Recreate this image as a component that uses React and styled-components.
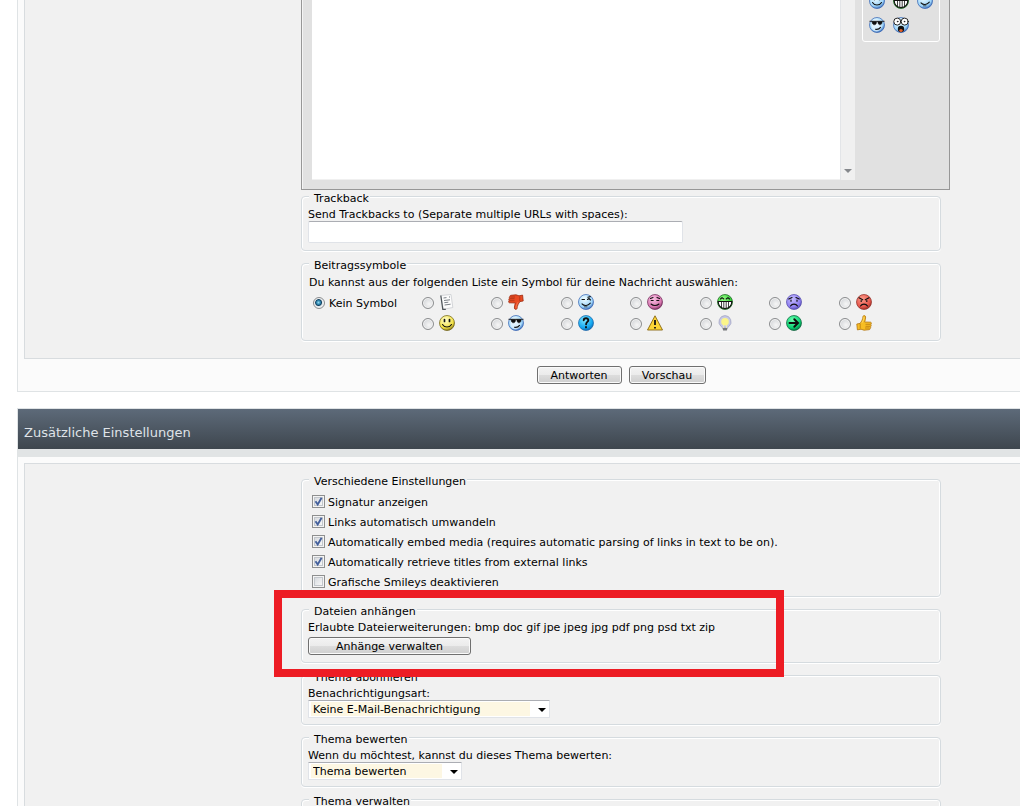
import React from 'react';
import styled, { createGlobalStyle } from 'styled-components';

const GlobalStyle = createGlobalStyle`
    * {
        box-sizing: border-box;
    }
    body {
        margin: 0;
        background: #fff;
        color: #000;
        font-family: "DejaVu Sans", Verdana, sans-serif;
        font-size: 11px;
        line-height: 13px;
    }
    input, select, button, textarea {
        font: inherit;
        color: inherit;
        margin: 0;
    }
`;

//Layout
const Page = styled.main`
    height: 100vh;
    overflow: hidden;
    padding-left: 17px;
`;

const Block = styled.section`
    border-left: 1px solid #dfe3e5;
    background: #fbfbfb;
    padding: ${(props) => (props.$top ? '6px 0 0 6px' : '0 0 0 6px')};
    margin-bottom: 16px;
    border-bottom: 1px solid #dfe3e5;
`;

const Panel = styled.div`
    display: grid;
    grid-template-columns: 276px minmax(0, 1fr);
    background: #f1f1f1;
    border-left: 1px solid #d8dcdf;
    border-top: ${(props) => (props.$top ? '1px solid #d8dcdf' : 'none')};
    border-bottom: 1px solid #d8dcdf;
    padding: ${(props) => (props.$top ? '9px 0 11px' : '0 0 11px')};
`;

const Column = styled.div`
    grid-column: 2;
`;

const Actions = styled.div`
    display: flex;
    justify-content: center;
    gap: 7px;
    max-width: 640px;
    margin-left: 277px;
    padding: 7px 0;
`;

const Heading = styled.h2`
    margin: 0;
    padding: 16px 6px 8px;
    height: 49px;
    border: 1px solid #dfe3e5;
    border-width: 1px 0 8px 1px;
    border-bottom-color: #e1e4e5;
    background: linear-gradient(#5d6a79, #3e464e) padding-box;
    color: #dfe3e8;
    font-size: 13px;
    font-weight: normal;
    line-height: 16px;
`;

//Editor
const Editor = styled.div`
    display: flex;
    max-width: 649px;
    height: 190px;
    border: 1px solid #979797;
    border-top: none;
    background: #e1e1e1;
    box-shadow: inset 1px 0 #f4f4f4;
    padding: 0 9px 9px 10px;
    overflow: hidden;
`;

const Message = styled.textarea`
    flex: 1;
    min-width: 0;
    border: none;
    border-bottom: 1px solid #f0f0f0;
    background: #fff;
    resize: none;
    outline: none;
    overflow: hidden;
`;

const ScrollTrack = styled.div`
    display: flex;
    align-items: flex-end;
    justify-content: center;
    width: 15px;
    padding-bottom: 7px;
    border-left: 1px solid #e3e5e8;
    background: #f0f0f0;
`;

const SmileyBox = styled.div`
    display: grid;
    grid-template-columns: repeat(3, 16px);
    align-content: start;
    gap: 8px;
    height: 52px;
    width: 78px;
    margin: -10px 0 0 7px;
    padding: 2px 6px;
    border: 1px solid #fff;
    border-radius: 3px;
`;

//Form parts
const Group = styled.fieldset`
    position: relative;
    min-width: 0;
    max-width: 640px;
    margin: 0 0 6px;
    padding: 5px 6px ${(props) => props.$bottom || 7}px;
    border: 1px solid #d5dbdf;
    border-radius: 4px;
    box-shadow: inset 1px 1px #fff, inset -1px 0 #fff, 0 1px #fff;
`;

const Legend = styled.legend`
    margin-left: 1px;
    padding: 4px 1px 0 5px;
    background: #f1f1f1;
    line-height: 9px;
`;

const Text = styled.div`
    margin-bottom: 3px;
`;

const FieldLabel = styled.label`
    display: block;
`;

const TextInput = styled.input`
    display: block;
    width: 375px;
    height: 22px;
    padding: 2px 4px;
    border: 1px solid #e0e3e8;
    border-top-color: #abadb3;
    border-radius: 2px;
    background: #fff;
`;

const Button = styled.button`
    display: block;
    width: ${(props) => props.$width}px;
    height: 18px;
    padding: 0;
    border: 1px solid #707070;
    border-radius: 3px;
    background: linear-gradient(#f3f3f3, #ebebeb 50%, #dddddd 50%, #cfcfcf);
    box-shadow: inset 0 0 0 1px #fafafa;
    line-height: 15px;
`;

const SelectBox = styled.div`
    position: relative;
    width: ${(props) => props.$width}px;
    svg {
        position: absolute;
        right: 4px;
        top: 8px;
        pointer-events: none;
    }
`;

const Select = styled.select`
    display: block;
    appearance: none;
    width: 100%;
    height: 18px;
    padding: 1px 20px 0 4px;
    border: 1px solid #e0e3e8;
    border-top-color: #abadb3;
    border-radius: 1px;
    background: #fff linear-gradient(#fdf7e3, #fdf7e3) no-repeat 2px 1px / calc(100% - 21px) 14px;
    line-height: 15px;
`;

const CheckRow = styled.label`
    display: flex;
    align-items: center;
    gap: 3px;
    height: 20px;
    padding-left: 4px;
`;

const CheckText = styled.span`
    padding-top: 2px;
`;

const CheckMark = styled.span`
    display: grid;
    > * {
        grid-area: 1 / 1;
    }
    svg {
        visibility: hidden;
        pointer-events: none;
    }
    input:checked + svg {
        visibility: visible;
    }
`;

const Checkbox = styled.input`
    appearance: none;
    width: 13px;
    height: 13px;
    border: 1px solid #8e8f8f;
    background: linear-gradient(135deg, #cfd3d8, #f6f6f6 80%);
    box-shadow: inset 0 0 0 1px #f4f4f4, inset 0 0 0 2px #c3c7cc;
`;

const SymbolGrid = styled.div`
    display: grid;
    grid-template-columns: 113px repeat(7, 1fr);
    grid-auto-rows: 21px;
    padding: 0 26px 0 1px;
`;

const SymbolIntro = styled(Text)`
    padding: 1px 0 0 1px;
`;

const RadioLabel = styled.label`
    display: flex;
    align-items: center;
    grid-column: ${(props) => props.$column};
    gap: 4px;
    padding-left: ${(props) => (props.$column === 1 ? 4 : 0)}px;
    svg {
        margin: 0 0 1px 1px;
    }
    span {
        padding-top: 2px;
    }
`;

const Radio = styled.input`
    appearance: none;
    flex: none;
    width: 12px;
    height: 12px;
    border: 1px solid #8b8d8f;
    border-radius: 50%;
    background: radial-gradient(circle at 60% 60%, #f6f6f6, #c9ccd0);
    box-shadow: inset 0 0 0 1px #f4f4f4;
    &:checked {
        background: radial-gradient(circle at 45% 45%, #8fd8f0 0, #2d83ac 2px, #12405f 3px, #dfe5ea 4px);
    }
`;

const Callout = styled.div`
    position: absolute;
    left: -28px;
    top: -26px;
    width: 510px;
    height: 87px;
    border: 8px solid #ed1c24;
    z-index: 2;
    pointer-events: none;
`;

//Icons
const faces = {
    blue: ['#f2fdff', '#9fd6fa', '#2f5fb0'],
    yellow: ['#ffffd0', '#f2e043', '#6b5d10'],
    pink: ['#f9c3e4', '#d877b0', '#6d2554'],
    green: ['#9cff8a', '#2ecb35', '#145c18'],
    violet: ['#c5bcff', '#8f7ff0', '#4f46a8'],
    red: ['#ff9c8c', '#e5564b', '#8e2a22'],
    cyan: ['#7ce6ff', '#12a6f0', '#1563a8'],
    mint: ['#6bffb0', '#08cf70', '#086038'],
};

const Ball = ({ color, label, children }) => {
    const id = `ball-${color}`;
    const [light, mid, edge] = faces[color];
    return (
        <svg width="16" height="16" viewBox="0 0 16 16" role="img" aria-label={label}>
            <defs>
                <radialGradient id={id} cx="0.4" cy="0.3" r="0.75">
                    <stop offset="0" stopColor={light} />
                    <stop offset="0.7" stopColor={mid} />
                    <stop offset="1" stopColor={edge} />
                </radialGradient>
            </defs>
            <circle cx="8" cy="8" r="7.5" fill={`url(#${id})`} stroke={edge} strokeWidth="0.7" />
            <g fill="none" stroke="#101010" strokeWidth="1.1" strokeLinecap="round">
                {children}
            </g>
        </svg>
    );
};

const Smile = ({ color }) => (
    <Ball color={color} label="Smile">
        <path d="M5.5 4.5v2M10.5 4.5v2" strokeWidth="1.7" />
        <path d="M3.5 9.5c2 3.4 7 3.4 9 0" />
    </Ball>
);

const Wink = () => (
    <Ball color="blue" label="Wink">
        <path d="M4 5.5h2.5M9.5 5.5l1.5-1 1.5 1.5M9.8 3.2l2.5-.6" />
        <path d="M4 9.8c2.2 2.4 6 2.2 8.3-.6" />
        <path d="M6.5 12.8h2.5" strokeWidth="0.7" />
    </Ball>
);

const Grin = () => (
    <Ball color="green" label="Big Grin">
        <path d="M3.5 5L5 3.6 6.8 5M9.2 5L11 3.6 12.5 5" />
        <path d="M1.2 7.5h13.6c0 3.5-2.2 7-6.8 7s-6.8-3.5-6.8-7z" fill="#fff" />
        <path d="M4.5 7.5v5.5M6.8 7.5v6.5M9.2 7.5v6.5M11.5 7.5v5.5" strokeWidth="0.8" />
    </Ball>
);

const Cool = () => (
    <Ball color="blue" label="Cool">
        <circle cx="7.5" cy="9.5" r="5" fill="#fff" fillOpacity="0.5" stroke="none" />
        <path d="M.8 4.3h14.4" strokeWidth="0.8" />
        <path d="M3 4.6h4.6c0 2.4-.9 3.2-2.2 3.2S3.2 7 3 4.6zM8.8 4.6h4.4c-.2 2.4-1.1 3.2-2.3 3.2S9 7 8.8 4.6z" fill="#101010" strokeWidth="0.5" />
        <path d="M6.5 12.2c2 .4 4-.4 5-1.8" />
    </Ball>
);

const Eek = () => (
    <Ball color="blue" label="EEK!">
        <circle cx="4.3" cy="4.6" r="3.5" fill="#fff" strokeWidth="0.9" />
        <circle cx="11.7" cy="4.6" r="3.5" fill="#fff" strokeWidth="0.9" />
        <circle cx="4.6" cy="4.6" r="0.4" fill="#101010" strokeWidth="0.7" />
        <circle cx="11.4" cy="4.6" r="0.4" fill="#101010" strokeWidth="0.7" />
        <ellipse cx="8" cy="12" rx="2.6" ry="2.6" fill="#101010" />
        <ellipse cx="8" cy="13.6" rx="1.7" ry="1.5" fill="#e2602b" stroke="none" />
    </Ball>
);

const Blush = () => (
    <Ball color="pink" label="Embarrassment">
        <path d="M3.5 4.5l2.5-1M10 3.5l2.5 1M4.2 6.5h2M9.8 6.5h2" />
        <path d="M4 10c2.2 2 5.8 2 8 0" />
    </Ball>
);

const Frown = () => (
    <Ball color="violet" label="Frown">
        <path d="M2.8 5L6 3.5M10 3.5L13.2 5M5 6.2v1M11 6.2v1" strokeWidth="1.2" />
        <path d="M4.5 12c1.6-2.5 5.4-2.5 7 0" />
    </Ball>
);

const Mad = () => (
    <Ball color="red" label="Mad">
        <path d="M3 3.8l3.7 2M13 3.8l-3.7 2M5.2 6.5v1M10.8 6.5v1" strokeWidth="1.2" />
        <path d="M4.5 12c1.6-2.5 5.4-2.5 7 0" />
    </Ball>
);

const Question = () => (
    <Ball color="cyan" label="Frage">
        <path d="M5.7 5.2C5.8 2.6 10.4 2.6 10.3 5.2c0 1.7-2.2 1.8-2.2 4M8 12v.4" strokeWidth="1.9" />
    </Ball>
);

const Arrow = () => (
    <Ball color="mint" label="Pfeil">
        <path d="M3.5 8h8M8.3 4.3L12 8l-3.7 3.7" strokeWidth="2" />
    </Ball>
);

const Post = () => (
    <svg width="16" height="16" viewBox="0 0 16 16" role="img" aria-label="Beitrag">
        <path d="M2 1.5L12 .5l1.8 13L4.3 15.3z" fill="#fcfcfc" stroke="#c4c7cb" strokeWidth="0.7" />
        <path d="M1.8 1.5l2 13.8h3" fill="none" stroke="#4d5358" strokeWidth="1.2" />
        <path d="M4.5 4l3-.4M5 6.5l6-.7M5.3 8.7l4-.5M5.6 11l6-.8M10 3h1" stroke="#7b8187" strokeWidth="1" />
    </svg>
);

const Thumb = ({ down }) => (
    <svg width="16" height="16" viewBox="0 0 16 16" role="img" aria-label={down ? 'Daumen runter' : 'Daumen hoch'}>
        <g transform={down ? 'matrix(-1 0 0 -1 16 16)' : undefined} strokeWidth="0.8">
            <path
                d="M.8 9L4 8.4C5.6 6.6 6.9 4 7 1.4 7.3.2 9.5.3 9.6 2c.1 1.8-.4 3.4-1 5l6 .2c1 .2 1 1.8.1 2 .8.3.7 1.8-.2 2 .6.5.4 1.7-.4 1.8.3.7-.1 1.6-1 1.7L8 15.2l-3-1-3.6.7z"
                fill={down ? '#e94a22' : '#f7bd24'}
                stroke={down ? '#9c2c11' : '#b17410'}
            />
            <path d="M9.5 9.3h4.8M9.5 11.3h4.5M9 13h4.5M4.2 8.6v5" fill="none" stroke={down ? '#a83316' : '#b97a12'} />
            <path d="M8 1.8c0 2-.8 4-2 6" fill="none" stroke={down ? '#ff8256' : '#ffe074'} />
        </g>
    </svg>
);

const Warning = () => (
    <svg width="16" height="16" viewBox="0 0 16 16" role="img" aria-label="Ausrufezeichen">
        <path d="M8 .8L15.5 15H.5z" fill="#fbd536" stroke="#8a6810" strokeWidth="0.9" strokeLinejoin="round" />
        <path d="M8 5v5M8 12v1.4" stroke="#151515" strokeWidth="1.8" />
    </svg>
);

const Bulb = () => (
    <svg width="16" height="16" viewBox="0 0 16 16" role="img" aria-label="Idee">
        <path d="M8 .6a6.2 6.2 0 0 0-4 10.8L5.8 13h4.4l1.8-1.6A6.2 6.2 0 0 0 8 .6z" fill="#c7c9e4" stroke="#a5a7c4" strokeWidth="0.8" />
        <circle cx="8" cy="6.8" r="3.8" fill="#fbf58a" />
        <path d="M5.5 13h5l-.6 2.6H6.1z" fill="#77797c" />
        <path d="M6.5 10v3M9.5 10v3" stroke="#f1eeb5" strokeWidth="0.8" />
    </svg>
);

const DownArrow = ({ color = '#000' }) => (
    <svg width="8" height="4" viewBox="0 0 8 4" aria-hidden="true">
        <path d="M0 0h8L4 4z" fill={color} />
    </svg>
);

//Data
const symbols = [
    [<Post />, <Thumb down />, <Wink />, <Blush />, <Grin />, <Frown />, <Mad />],
    [<Smile color="yellow" />, <Cool />, <Question />, <Warning />, <Bulb />, <Arrow />, <Thumb />],
];

const options = [
    { name: 'Signatur anzeigen', checked: true },
    { name: 'Links automatisch umwandeln', checked: true },
    { name: 'Automatically embed media (requires automatic parsing of links in text to be on).', checked: true },
    { name: 'Automatically retrieve titles from external links', checked: true },
    { name: 'Grafische Smileys deaktivieren', checked: false },
];

const PostSymbols = () => (
    <Group $bottom={6}>
        <Legend>Beitragssymbole</Legend>
        <SymbolIntro>Du kannst aus der folgenden Liste ein Symbol für deine Nachricht auswählen:</SymbolIntro>
        <SymbolGrid>
            <RadioLabel $column={1}>
                <Radio type="radio" name="symbol" defaultChecked />
                <span>Kein Symbol</span>
            </RadioLabel>
            {symbols.map((row, r) =>
                row.map((icon, i) => (
                    <RadioLabel $column={i + 2} key={`${r}-${i}`}>
                        <Radio type="radio" name="symbol" />
                        {icon}
                    </RadioLabel>
                ))
            )}
        </SymbolGrid>
    </Group>
);

const Dropdown = ({ id, legend, label, value, width }) => (
    <Group $bottom={6}>
        <Legend>{legend}</Legend>
        <FieldLabel htmlFor={id}>{label}</FieldLabel>
        <SelectBox $width={width}>
            <Select id={id}>
                <option>{value}</option>
            </Select>
            <DownArrow />
        </SelectBox>
    </Group>
);

const App = () => {
    return (
        <>
            <GlobalStyle />
            <Page>
                <Block>
                    <Panel>
                        <Column>
                            <Editor>
                                <Message aria-label="Nachricht" />
                                <ScrollTrack>
                                    <DownArrow color="#85888c" />
                                </ScrollTrack>
                                <SmileyBox>
                                    <Smile color="blue" />
                                    <Grin />
                                    <Wink />
                                    <Cool />
                                    <Eek />
                                </SmileyBox>
                            </Editor>
                            <Group>
                                <Legend>Trackback</Legend>
                                <FieldLabel htmlFor="trackback">
                                    Send Trackbacks to (Separate multiple URLs with spaces):
                                </FieldLabel>
                                <TextInput id="trackback" type="text" />
                            </Group>
                            <PostSymbols />
                        </Column>
                    </Panel>
                    <Actions>
                        <Button type="submit" $width={85}>Antworten</Button>
                        <Button type="button" $width={77}>Vorschau</Button>
                    </Actions>
                </Block>

                <Heading>Zusätzliche Einstellungen</Heading>
                <Block $top>
                    <Panel $top>
                        <Column>
                            <Group $bottom={5}>
                                <Legend>Verschiedene Einstellungen</Legend>
                                {options.map((option) => (
                                    <CheckRow key={option.name}>
                                        <CheckMark>
                                            <Checkbox type="checkbox" defaultChecked={option.checked} />
                                            <svg width="13" height="13" viewBox="0 0 13 13" aria-hidden="true">
                                                <path d="M3.5 6.2l2.2 3.3L9.6 2.8" fill="none" stroke="#44609c" strokeWidth="1.9" />
                                            </svg>
                                        </CheckMark>
                                        <CheckText>{option.name}</CheckText>
                                    </CheckRow>
                                ))}
                            </Group>
                            <Group>
                                <Legend>Dateien anhängen</Legend>
                                <Text>Erlaubte Dateierweiterungen: bmp doc gif jpe jpeg jpg pdf png psd txt zip</Text>
                                <Button type="button" $width={163}>Anhänge verwalten</Button>
                                <Callout />
                            </Group>
                            <Dropdown
                                id="notify"
                                legend="Thema abonnieren"
                                label="Benachrichtigungsart:"
                                value="Keine E-Mail-Benachrichtigung"
                                width={242}
                            />
                            <Dropdown
                                id="rating"
                                legend="Thema bewerten"
                                label="Wenn du möchtest, kannst du dieses Thema bewerten:"
                                value="Thema bewerten"
                                width={154}
                            />
                            <Group>
                                <Legend>Thema verwalten</Legend>
                            </Group>
                        </Column>
                    </Panel>
                </Block>
            </Page>
        </>
    );
};

export default App;
